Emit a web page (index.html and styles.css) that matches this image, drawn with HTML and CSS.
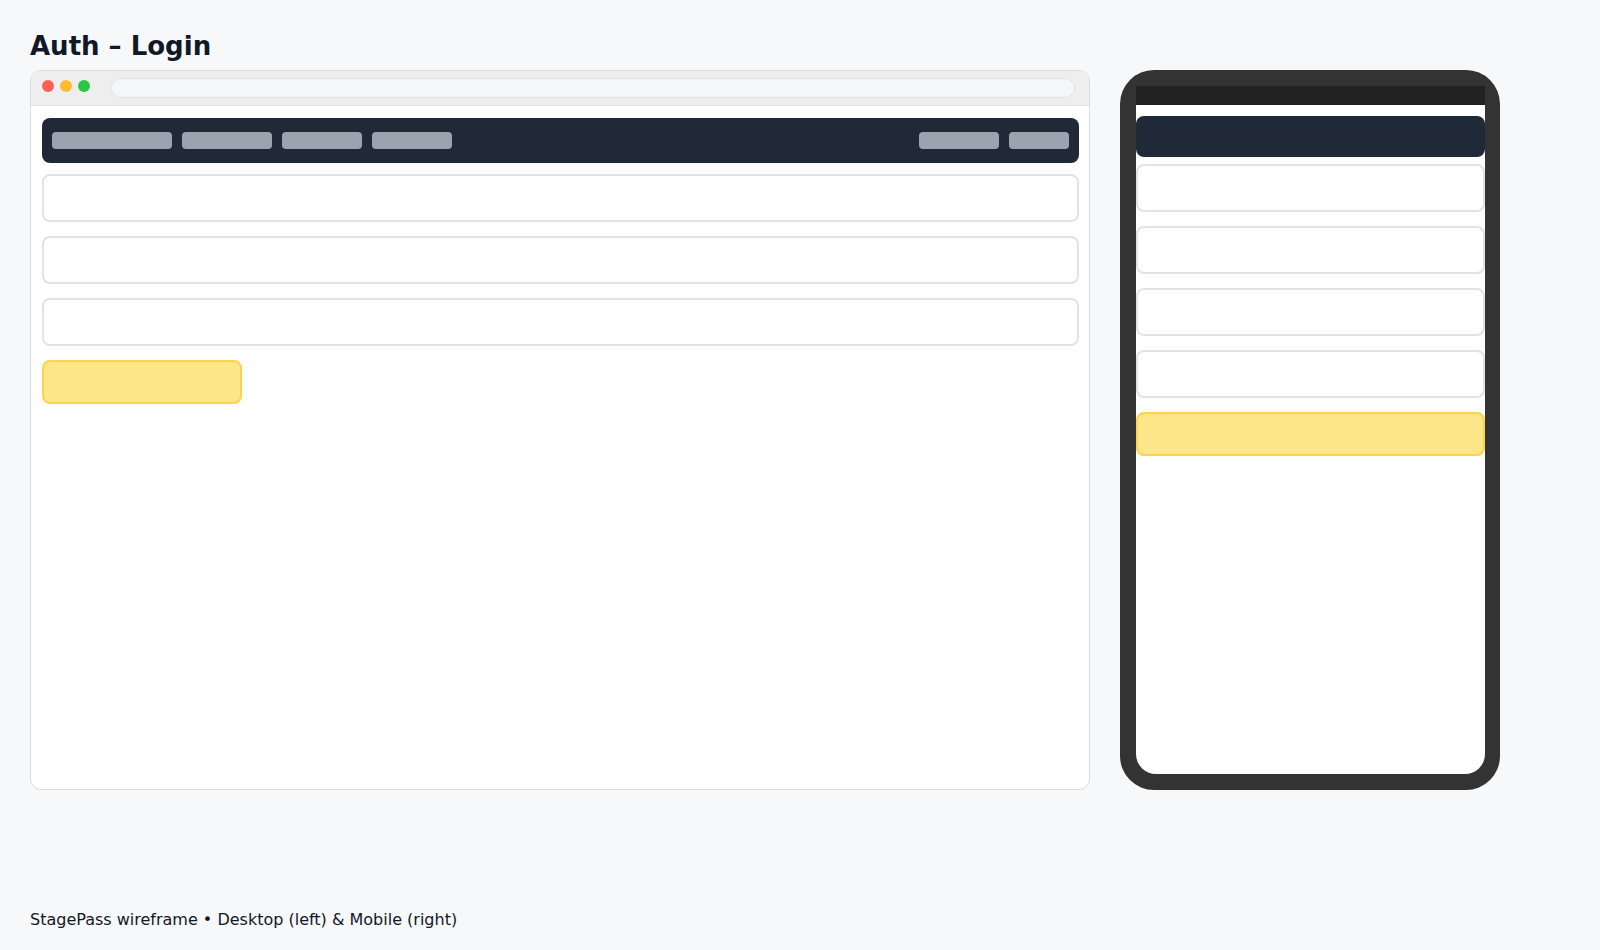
FILE: index.html
```html
<!DOCTYPE html>
<html lang="en">
<head>
<meta charset="utf-8">
<title>Auth – Login</title>
<link rel="stylesheet" href="styles.css">
</head>
<body>
  <h1 class="title">Auth – Login</h1>
  <div class="stage">
    <div class="desktop">
      <div class="chrome">
        <span class="dot dot-red"></span>
        <span class="dot dot-yellow"></span>
        <span class="dot dot-green"></span>
        <div class="url"></div>
      </div>
      <div class="desk-content">
        <div class="nav">
          <span class="pill w120"></span>
          <span class="pill w90"></span>
          <span class="pill w80"></span>
          <span class="pill w80"></span>
          <span class="spacer"></span>
          <span class="pill w80"></span>
          <span class="pill w60"></span>
        </div>
        <div class="field"></div>
        <div class="field"></div>
        <div class="field"></div>
        <div class="btn desk-btn"></div>
      </div>
    </div>
    <div class="phone">
      <div class="screen">
        <div class="status"></div>
        <div class="phone-content">
          <div class="m-nav"></div>
          <div class="field"></div>
          <div class="field"></div>
          <div class="field"></div>
          <div class="field"></div>
          <div class="btn"></div>
        </div>
      </div>
    </div>
  </div>
  <p class="footer">StagePass wireframe • Desktop (left) &amp; Mobile (right)</p>
</body>
</html>
```

FILE: styles.css
```css
* { box-sizing: border-box; }
html, body { margin: 0; padding: 0; }
body {
  background: #f7f8fa;
  font-family: "DejaVu Sans", "Liberation Sans", sans-serif;
  color: #111827;
  padding: 30px 30px 0 30px;
  width: 1600px;
  height: 950px;
}
.title {
  margin: 0 0 8px 0;
  font-size: 26px;
  line-height: 32px;
  font-weight: bold;
  color: #111827;
}
.stage {
  display: flex;
  gap: 30px;
  align-items: flex-start;
}
.desktop {
  width: 1060px;
  height: 720px;
  background: #ffffff;
  border: 1px solid #d9dde3;
  border-radius: 11px;
  overflow: hidden;
}
.chrome {
  height: 35px;
  background: #eeeeee;
  border-bottom: 1px solid #dfe2e6;
  display: flex;
  align-items: flex-start;
  padding: 0 14px 0 11px;
}
.dot {
  width: 12px;
  height: 12px;
  border-radius: 50%;
  margin-top: 9px;
  margin-right: 6px;
  flex: none;
}
.dot-red { background: #ff5f57; }
.dot-yellow { background: #febc2e; }
.dot-green { background: #28c840; }
.url {
  flex: 1;
  height: 20px;
  margin-top: 7px;
  margin-left: 15px;
  background: #f5f6f8;
  border: 1px solid #dfe2e6;
  border-radius: 10px;
}
.desk-content {
  padding: 12px 10px 11px 11px;
}
.nav {
  height: 45px;
  background: #1f2937;
  border-radius: 8px;
  display: flex;
  align-items: center;
  gap: 10px;
  padding: 0 10px;
  margin-bottom: 11px;
}
.pill {
  height: 17px;
  background: #9ca3af;
  border-radius: 4px;
  flex: none;
}
.w120 { width: 120px; }
.w90 { width: 90px; }
.w80 { width: 80px; }
.w60 { width: 60px; }
.spacer { flex: 1; }
.field {
  height: 48px;
  background: #ffffff;
  border: 2px solid #e0e3e8;
  border-radius: 8px;
  margin-bottom: 14px;
}
.btn {
  height: 44px;
  background: #fde68a;
  border: 2px solid #fcd34d;
  border-radius: 8px;
}
.desk-btn { width: 200px; }
.phone {
  width: 380px;
  height: 720px;
  background: #333333;
  border-radius: 34px;
  padding: 16px 15px 16px 16px;
}
.screen {
  height: 100%;
  background: #ffffff;
  border-radius: 0 0 20px 20px;
  overflow: hidden;
}
.status {
  height: 19px;
  background: #222222;
}
.phone-content {
  padding-top: 11px;
}
.m-nav {
  height: 41px;
  background: #1f2937;
  border-radius: 8px;
  margin-bottom: 7px;
}
.footer {
  margin: 122px 0 0 0;
  font-size: 16px;
  line-height: 16px;
  color: #111827;
}
```
